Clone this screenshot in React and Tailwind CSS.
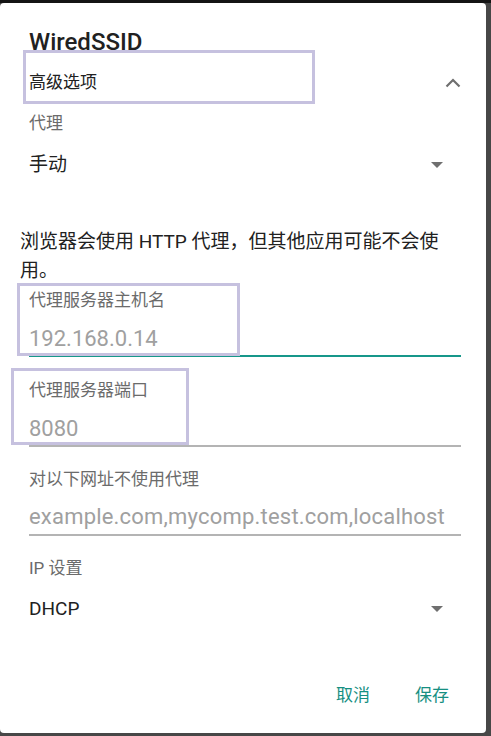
const font = { fontFamily: '"Roboto", "Noto Sans CJK SC", sans-serif' }

const ChevronUp = () => (
    <svg width="16" height="10" viewBox="0 0 16 10" className="block">
        <path d="M1.5 8.5 L8 2 L14.5 8.5" fill="none" stroke="#6f6f6f" strokeWidth="2.2" />
    </svg>
)

const Caret = () => (
    <svg width="12" height="6" viewBox="0 0 12 6" className="block">
        <path d="M0 0 L12 0 L6 6 Z" fill="#6f6f6f" />
    </svg>
)

const Label = ({ children, className = '' }) => (
    <div className={`h-[24px] leading-[24px] text-[17px] text-[#6b6b6b] ${className}`}>{children}</div>
)

const Hint = ({ children, className = '' }) => (
    <div className={`h-[30px] leading-[30px] text-[22px] text-[#a0a0a0] whitespace-nowrap ${className}`}>{children}</div>
)

const Marker = ({ className }) => (
    <div className={`absolute border-[3px] border-[#c6c1df] ${className}`} />
)

export default function App() {
    return (
        <div className="relative w-[491px] h-[736px] overflow-hidden bg-[#474747]" style={font}>
            <div className="h-[3px] bg-[#141414]" />
            <div className="w-[486px] h-[730px] bg-white rounded-[4px]">
                <div className="pl-[29px] pr-[25px] pt-[25px]">
                    <div className="h-[28px] leading-[28px] text-[24px] font-medium text-[#212121]">WiredSSID</div>

                    <div className="mt-[7px] h-[40px] flex items-center justify-between">
                        <span className="text-[17px] text-[#212121]">高级选项</span>
                        <span><ChevronUp /></span>
                    </div>

                    <Label className="mt-[8px]">代理</Label>

                    <div className="mt-[10px] h-[40px] flex items-center justify-between">
                        <span className="text-[19px] text-[#212121]">手动</span>
                        <span className="mr-[18px]"><Caret /></span>
                    </div>

                    <p className="mt-[42px] -ml-[9px] text-[19px] leading-[29px] text-[#212121]">
                        浏览器会使用 HTTP 代理，但其他应用可能不会使用。
                    </p>

                    <Label className="mt-[3px]">代理服务器主机名</Label>
                    <Hint className="mt-[12px]">192.168.0.14</Hint>
                    <div className="mt-[1px] h-[2px] bg-[#17978a]" />

                    <Label className="mt-[21px]">代理服务器端口</Label>
                    <Hint className="mt-[12px]">8080</Hint>
                    <div className="mt-[1px] h-[2px] bg-[#b4b4b4]" />

                    <Label className="mt-[20px]">对以下网址不使用代理</Label>
                    <Hint className="mt-[11px] tracking-[0.2px]">example.com,mycomp.test.com,localhost</Hint>
                    <div className="mt-[2px] h-[2px] bg-[#b4b4b4]" />

                    <Label className="mt-[20px]">IP 设置</Label>

                    <div className="mt-[9px] h-[40px] flex items-center justify-between">
                        <span className="text-[19px] text-[#212121]">DHCP</span>
                        <span className="mr-[18px]"><Caret /></span>
                    </div>

                    <div className="mt-[47px] h-[40px] flex items-center justify-end gap-[21px]">
                        <button className="px-[12px] text-[17px] text-[#168f82]">取消</button>
                        <button className="px-[12px] text-[17px] text-[#168f82]">保存</button>
                    </div>
                </div>
            </div>

            <Marker className="left-[23px] top-[50px] w-[292px] h-[54px]" />
            <Marker className="left-[17px] top-[283px] w-[223px] h-[73px]" />
            <Marker className="left-[11px] top-[368px] w-[178px] h-[77px]" />
        </div>
    )
}
